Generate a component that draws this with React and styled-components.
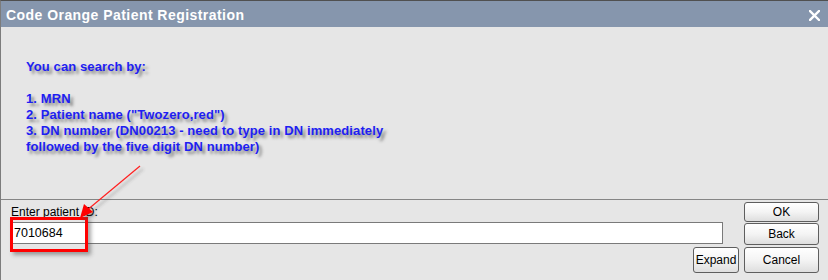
import React from "react";
import styled, { createGlobalStyle } from "styled-components";

const GlobalStyle = createGlobalStyle`
  html, body {
    margin: 0;
    padding: 0;
    background: #e6e6e6;
  }
  body {
    width: 828px;
    height: 280px;
    overflow: hidden;
    font-family: "Liberation Sans", Arial, sans-serif;
  }
`;

const Dialog = styled.div`
  position: relative;
  width: 828px;
  height: 280px;
  box-sizing: border-box;
  border-top: 1px solid #505050;
  border-left: 1px solid #7c7c7c;
  background: #e6e6e6;
  display: flex;
  flex-direction: column;
`;

const TitleBar = styled.div`
  height: 26px;
  background: #8696ad;
  display: flex;
  align-items: center;
  justify-content: space-between;
  padding: 0 8px 0 5px;
`;

const Title = styled.span`
  color: #ffffff;
  font-weight: bold;
  font-size: 14px;
  letter-spacing: 0.45px;
  padding-top: 2px;
`;

const CloseButton = styled.svg`
  width: 11px;
  height: 11px;
  margin-top: 2px;
`;

const Message = styled.div`
  height: 172px;
  box-sizing: border-box;
  padding: 32px 0 0 25px;
  color: #1e1ef2;
  font-weight: bold;
  font-size: 13px;
  letter-spacing: 0.1px;
  line-height: 16px;
  text-shadow: 3px 3px 3px rgba(70, 70, 70, 0.6);
`;

const Line = styled.div`
  min-height: 16px;
`;

const Footer = styled.div`
  border-top: 1px solid #858585;
  padding: 2px 9px 0 10px;
  display: flex;
  flex-direction: column;
  gap: 2px;
`;

const EntryRow = styled.div`
  display: flex;
  gap: 21px;
`;

const Field = styled.div`
  flex: 1;
  display: flex;
  flex-direction: column;
`;

const Label = styled.label`
  height: 20px;
  line-height: 21px;
  font-size: 12px;
  color: #000;
`;

const Input = styled.input`
  height: 22px;
  box-sizing: border-box;
  border: 1px solid #7a7a7a;
  background: #fff;
  padding: 0 2px;
  font-family: "Liberation Sans", Arial, sans-serif;
  font-size: 12.5px;
  color: #000;
  outline: none;
`;

const ButtonStack = styled.div`
  display: flex;
  flex-direction: column;
  gap: 1px;
`;

const ActionRow = styled.div`
  display: flex;
  justify-content: flex-end;
  gap: 5px;
`;

const Button = styled.button`
  width: ${p => p.$w || 75}px;
  height: ${p => p.$h || 22}px;
  box-sizing: border-box;
  border: 1px solid #5e5e5e;
  border-radius: 3px;
  background: linear-gradient(#ffffff 0%, #f4f4f4 50%, #dedede 100%);
  font-family: "Liberation Sans", Arial, sans-serif;
  font-size: 12px;
  color: #000;
  padding: 0;
  cursor: pointer;
`;

const Highlight = styled.div`
  position: absolute;
  left: 9px;
  top: 216px;
  width: 78px;
  height: 35px;
  box-sizing: border-box;
  border: 3px solid #ff0000;
  box-shadow: 3px 3px 4px rgba(60, 60, 60, 0.45);
  pointer-events: none;
`;

const Arrow = styled.svg`
  position: absolute;
  left: 0;
  top: 0;
  width: 828px;
  height: 280px;
  pointer-events: none;
`;

export default function App() {
  return (
    <Dialog>
      <GlobalStyle />
      <TitleBar>
        <Title>Code Orange Patient Registration</Title>
        <CloseButton viewBox="0 0 11 11">
          <path d="M1 1 L10 10 M10 1 L1 10" stroke="#fff" strokeWidth="2.4" strokeLinecap="square" />
        </CloseButton>
      </TitleBar>
      <Message>
        <Line>You can search by:</Line>
        <Line />
        <Line>1. MRN</Line>
        <Line>2. Patient name ("Twozero,red")</Line>
        <Line>3. DN number (DN00213 - need to type in DN immediately</Line>
        <Line>followed by the five digit DN number)</Line>
      </Message>
      <Footer>
        <EntryRow>
          <Field>
            <Label>Enter patient ID:</Label>
            <Input defaultValue="7010684" />
          </Field>
          <ButtonStack>
            <Button $h={20}>OK</Button>
            <Button $h={22}>Back</Button>
          </ButtonStack>
        </EntryRow>
        <ActionRow>
          <Button $w={46} $h={26}>Expand</Button>
          <Button $h={26}>Cancel</Button>
        </ActionRow>
      </Footer>
      <Highlight />
      <Arrow viewBox="0 0 828 280">
        <defs>
          <filter id="sh" x="-20%" y="-20%" width="140%" height="140%">
            <feDropShadow dx="3" dy="3" stdDeviation="1.5" floodColor="#444" floodOpacity="0.4" />
          </filter>
        </defs>
        <g filter="url(#sh)">
          <line x1="139" y1="165" x2="85" y2="210" stroke="#ff2020" strokeWidth="1.2" />
          <polygon points="79,217 83,203 92,211" fill="#ff0000" />
        </g>
      </Arrow>
    </Dialog>
  );
}
